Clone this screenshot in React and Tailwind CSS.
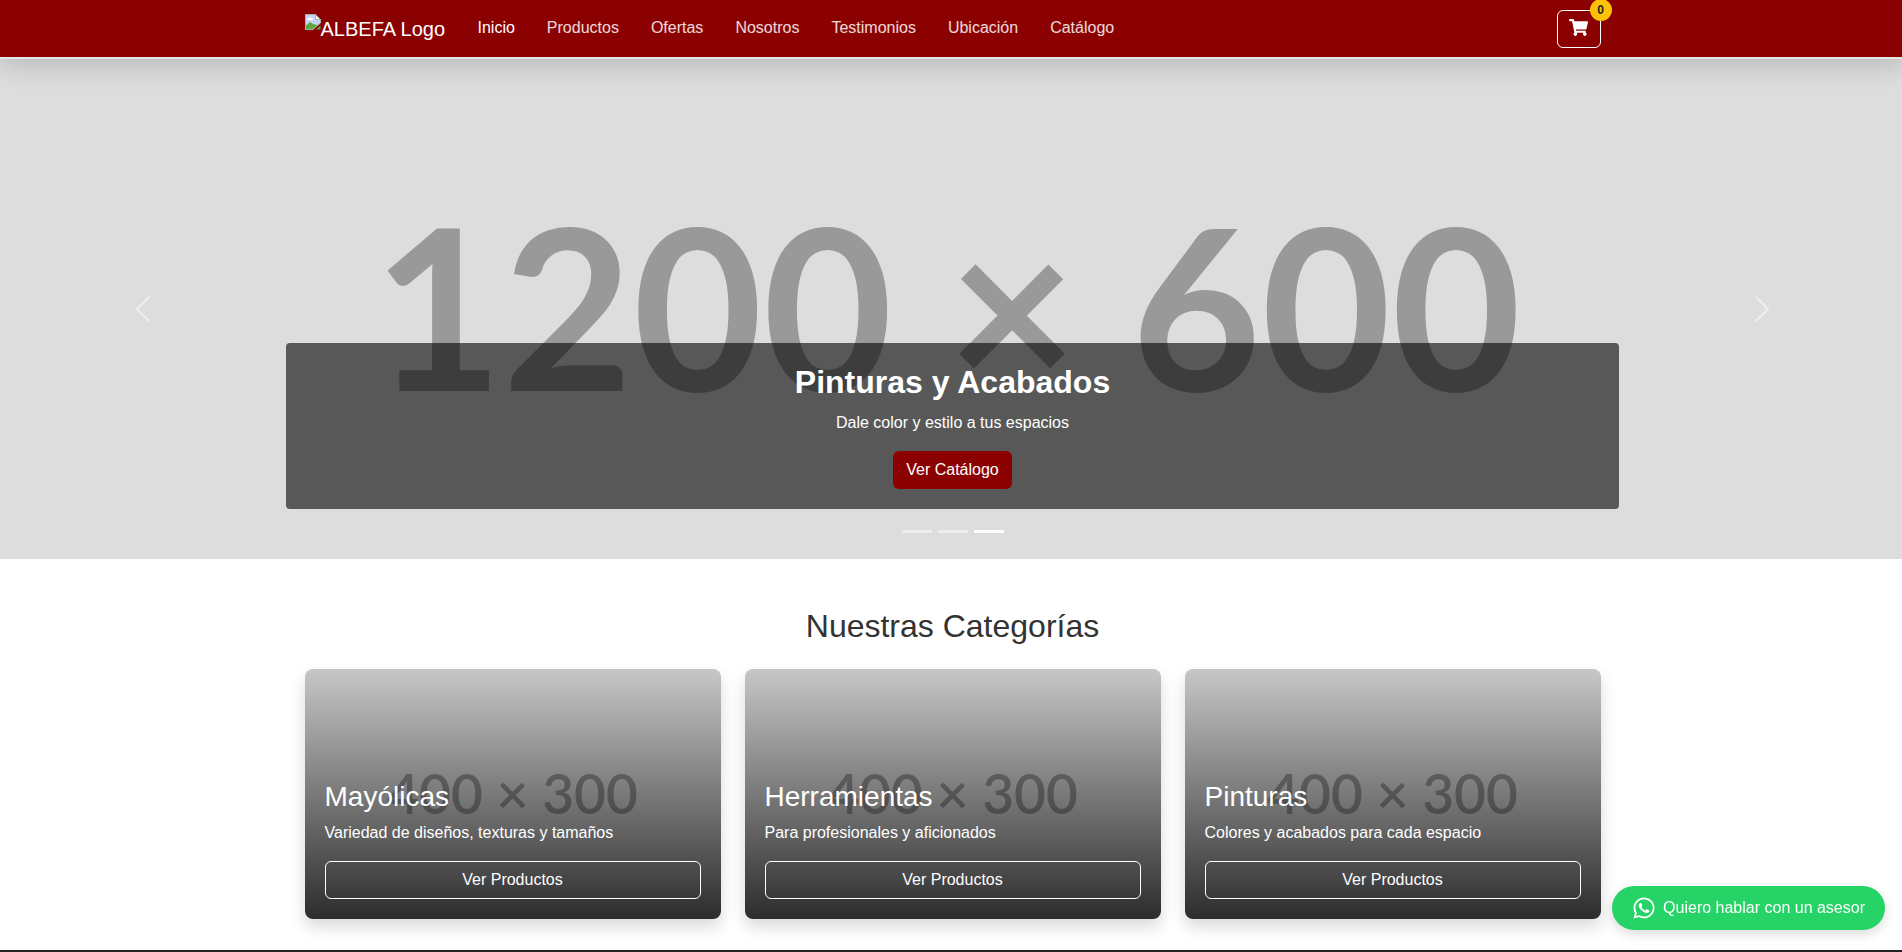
import { FaShoppingCart, FaWhatsapp } from "react-icons/fa";

const navLinks = ["Productos", "Ofertas", "Nosotros", "Testimonios", "Ubicación", "Catálogo"];

const categories = [
  { title: "Mayólicas", text: "Variedad de diseños, texturas y tamaños" },
  { title: "Herramientas", text: "Para profesionales y aficionados" },
  { title: "Pinturas", text: "Colores y acabados para cada espacio" },
];

// chrome's broken image icon
function BrokenImage() {
  return (
    <svg width="16" height="16" viewBox="0 0 16 16" className="absolute left-0 top-0">
      <path d="M.5 .5h10l5 5v3.5L8 15.5H.5z" fill="#c6d6f2" stroke="#b0b0b0" strokeWidth="1" />
      <path d="M10.5 .5v5h5z" fill="#f4f4f4" stroke="#b0b0b0" strokeWidth="1" />
      <ellipse cx="5" cy="5" rx="3" ry="1.3" fill="#fff" />
      <path d="M1 15V11.5L5 8l3 2 2 .5 2.5 .5L8 15z" fill="#5fa83e" />
      <path d="M15.5 11.5V15.5H11z" fill="#5fa83e" />
    </svg>
  );
}

function CarouselArrow({ side }) {
  const isLeft = side === "left";
  return (
    <div
      className={`absolute top-0 bottom-0 w-[15%] flex items-center justify-center opacity-50 ${
        isLeft ? "left-0" : "right-0"
      }`}
    >
      <svg width="32" height="32" viewBox="0 0 16 16" fill="#fff">
        {isLeft ? (
          <path d="M11.354 1.646a.5.5 0 0 1 0 .708L5.707 8l5.647 5.646a.5.5 0 0 1-.708.708l-6-6a.5.5 0 0 1 0-.708l6-6a.5.5 0 0 1 .708 0z" />
        ) : (
          <path d="M4.646 1.646a.5.5 0 0 1 .708 0l6 6a.5.5 0 0 1 0 .708l-6 6a.5.5 0 0 1-.708-.708L10.293 8 4.646 2.354a.5.5 0 0 1 0-.708z" />
        )}
      </svg>
    </div>
  );
}

function CategoryCard({ title, text }) {
  return (
    <div className="relative h-[250px] rounded-lg overflow-hidden bg-[#dddddd] shadow-[0_8px_16px_rgba(0,0,0,0.15)]">
      {/* placeholder image text */}
      <div className="absolute inset-0 pb-[2px] flex items-center justify-center text-[55px] font-semibold font-['Lato',sans-serif] text-[#999999]">
        400 × 300
      </div>
      <div className="relative h-full flex flex-col justify-end p-5 text-white bg-[linear-gradient(rgba(0,0,0,0.1),rgba(0,0,0,0.8))]">
        <h3 className="text-[28px] leading-[34px] font-medium mb-[7px]">{title}</h3>
        <p className="text-base leading-6 mb-4">{text}</p>
        <button className="h-[38px] w-full border border-white rounded-md text-base text-white">Ver Productos</button>
      </div>
    </div>
  );
}

export default function App() {
  return (
    <div className="overflow-hidden font-['Liberation_Sans',Arial,sans-serif] text-[#333333] bg-white">
      <div className="w-[1905px]">
        {/* Navbar */}
        <nav className="relative z-10 h-[59px] border-b-2 border-[#e4e4e4] bg-[#8b0000] shadow-[0_8px_24px_rgba(0,0,0,0.15)]">
          <div className="w-[1320px] h-full mx-auto px-3 flex items-center justify-between">
            <div className="flex items-center">
              <div className="relative w-[141px] h-[30px] text-white text-xl leading-[30px] pl-4 whitespace-nowrap mr-4">
                <BrokenImage />
                ALBEFA Logo
              </div>
              <a className="px-4 mb-[2px] text-base text-white">Inicio</a>
              {navLinks.map((link) => (
                <a key={link} className="px-4 mb-[2px] text-base text-white/85">
                  {link}
                </a>
              ))}
            </div>
            <button className="relative w-[44px] h-[38px] flex items-center justify-center border border-white rounded-md text-white">
              <FaShoppingCart size={19} className="mb-[2px]" />
              <span className="absolute top-[-12px] right-[-12px] w-[22px] h-[22px] rounded-full bg-[#ffc107] text-[#212529] text-xs font-bold flex items-center justify-center">
                0
              </span>
            </button>
          </div>
        </nav>

        {/* Hero */}
        <section className="relative h-[500px] bg-[#dddddd] overflow-hidden">
          <div className="h-full pb-[8px] pr-[11px] flex items-center justify-center text-[224px] font-bold font-['Lato',sans-serif] text-[#999999] whitespace-nowrap">
            1200 × 600
          </div>
          <div className="absolute left-[15%] right-[15%] bottom-[50px] h-[166px] pt-5 rounded bg-black/60 text-white text-center">
            <h2 className="text-[32px] leading-[38px] font-bold mb-[10px]">Pinturas y Acabados</h2>
            <p className="text-base leading-6 mb-4">Dale color y estilo a tus espacios</p>
            <button className="h-[38px] px-[13px] rounded-md bg-[#8b0000] text-base text-white">Ver Catálogo</button>
          </div>
          <CarouselArrow side="left" />
          <CarouselArrow side="right" />
          <div className="absolute left-0 right-0 bottom-[26px] flex justify-center gap-[6px]">
            <span className="w-[30px] h-[3px] bg-white opacity-50" />
            <span className="w-[30px] h-[3px] bg-white opacity-50" />
            <span className="w-[30px] h-[3px] bg-white" />
          </div>
        </section>

        {/* Categorias */}
        <section className="w-[1320px] mx-auto px-3 pt-[48px] pb-[31px]">
          <h2 className="text-[32px] leading-[38px] text-center mb-[24px]">Nuestras Categorías</h2>
          <div className="grid grid-cols-3 gap-6">
            {categories.map((cat) => (
              <CategoryCard key={cat.title} {...cat} />
            ))}
          </div>
        </section>

        <footer className="h-[2px] bg-[#222222]" />
      </div>

      {/* WhatsApp */}
      <a className="fixed right-[17px] bottom-[22px] h-[44px] px-5 rounded-full bg-[#25d366] text-white text-base flex items-center gap-[7px] shadow-[0_4px_12px_rgba(0,0,0,0.15)]">
        <FaWhatsapp size={24} />
        Quiero hablar con un asesor
      </a>
    </div>
  );
}
